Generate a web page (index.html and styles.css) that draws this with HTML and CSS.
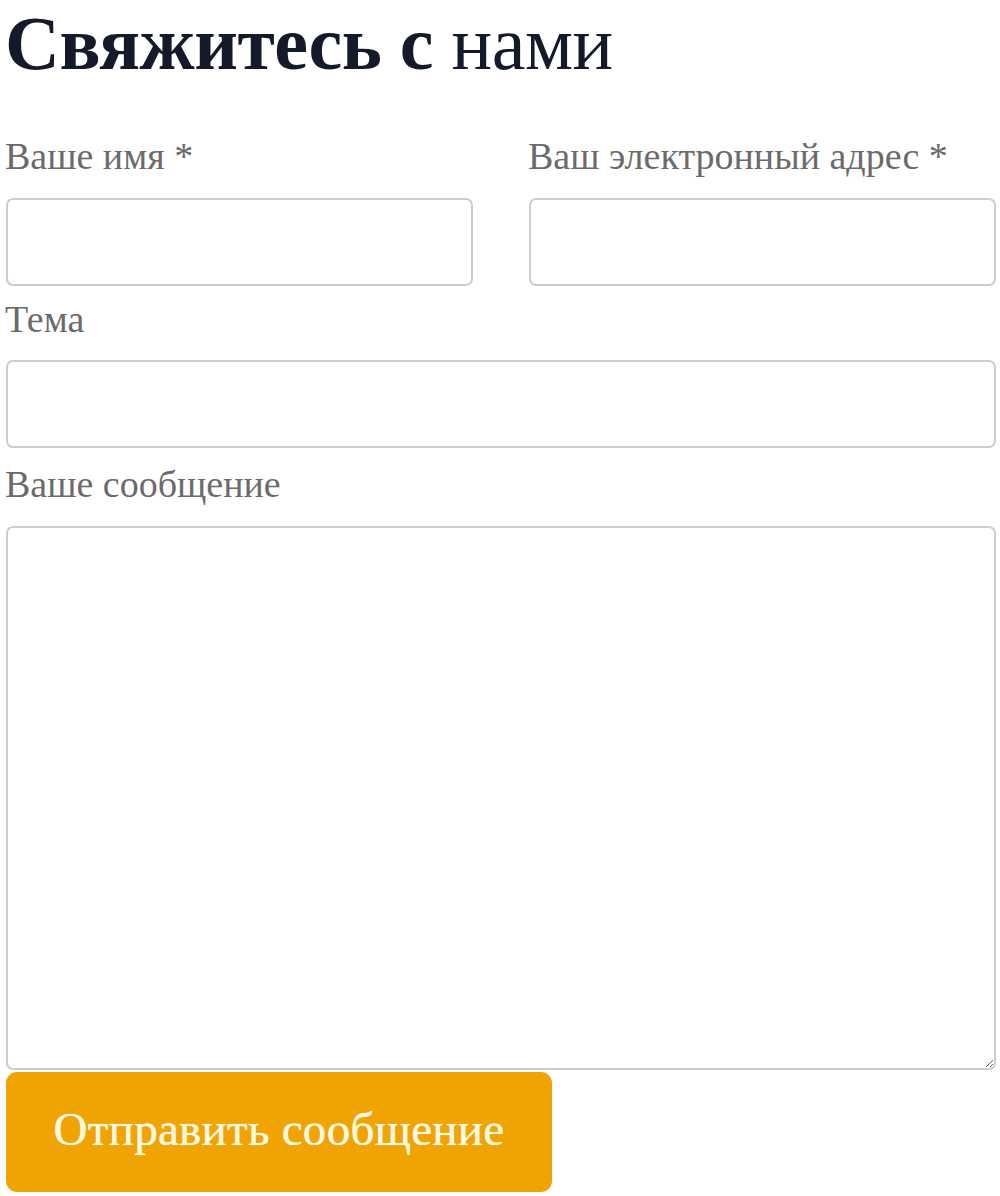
FILE: index.html
```html
<!DOCTYPE html>
<html lang="ru">
<head>
<meta charset="utf-8">
<title>Свяжитесь с нами</title>
<link rel="stylesheet" href="styles.css">
</head>
<body>
<main class="contact">
  <h1 class="title"><b>Свяжитесь с</b> нами</h1>
  <form class="form">
    <div class="row">
      <div class="field">
        <label class="label" for="name">Ваше имя *</label>
        <input class="input" id="name" type="text">
      </div>
      <div class="field">
        <label class="label" for="email">Ваш электронный адрес *</label>
        <input class="input" id="email" type="email">
      </div>
    </div>
    <div class="field field-subject">
      <label class="label" for="subject">Тема</label>
      <input class="input" id="subject" type="text">
    </div>
    <div class="field field-message">
      <label class="label" for="message">Ваше сообщение</label>
      <textarea class="input textarea" id="message"></textarea>
    </div>
    <button class="submit" type="button">Отправить сообщение</button>
  </form>
</main>
</body>
</html>
```
FILE: styles.css
```css
* { box-sizing: border-box; }
html, body { margin: 0; background: #fff; }
body { font-family: "Liberation Serif", "Times New Roman", serif; }

.contact {
  padding: 0 4px 0 6px;
  width: 1000px;
}

.title {
  margin: 0 0 47px -1px;
  font-size: 76px;
  line-height: 1.15;
  font-weight: 400;
  color: #151a2b;
  letter-spacing: -0.5px;
}
.title b { font-weight: 700; }

.form {
  display: flex;
  flex-direction: column;
}

.row {
  display: grid;
  grid-template-columns: 1fr 1fr;
  column-gap: 56px;
  margin-bottom: 11px;
}

.field {
  display: flex;
  flex-direction: column;
}
.field-subject { margin-bottom: 14px; }
.field-message { margin-bottom: 2px; }

.label {
  display: block;
  font-size: 38px;
  line-height: normal;
  color: #6b6b6b;
  margin: 0 0 19.5px -1px;
}

.input {
  display: block;
  width: 100%;
  height: 88px;
  border: 2px solid #cdcdcd;
  border-radius: 7px;
  background: #fff;
  font: inherit;
  margin: 0;
}

.textarea {
  height: 544px;
  resize: vertical;
}

.submit {
  align-self: flex-start;
  width: 546px;
  height: 120px;
  border: none;
  border-radius: 11px;
  background: #f0a404;
  color: #fff9e2;
  font-family: "Liberation Serif", "Times New Roman", serif;
  font-size: 47px;
  letter-spacing: 0.3px;
  font-weight: 400;
  padding: 0 20px 6px;
  text-shadow: 0 0 1px #fff3c0;
}
```
